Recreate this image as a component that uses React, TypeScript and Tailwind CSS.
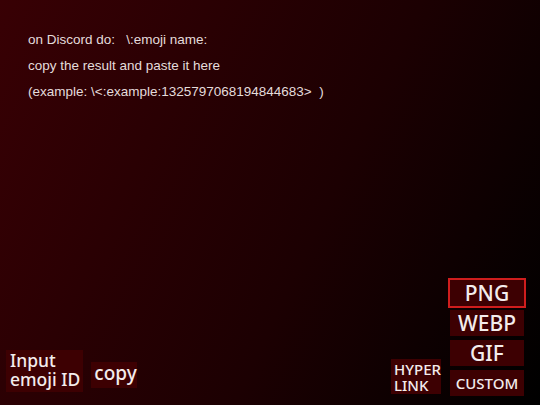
import React from "react";

const btn =
  "bg-[#3d0002] text-[#f3ecec] flex items-center justify-center leading-none";

export default function App() {
  return (
    <div className="w-[540px] h-[405px] overflow-hidden flex flex-col justify-between bg-[linear-gradient(115deg,#380004_0%,#1c0002_58%,#000000_100%)]">
      <div
        className="pt-[27px] pl-[28px] text-[13.5px] leading-[26px] text-[#e4dcdc] whitespace-pre"
        style={{ fontFamily: '"Liberation Sans", Arial, sans-serif' }}
      >
        <div>{"on Discord do:   \\:emoji name:"}</div>
        <div>copy the result and paste it here</div>
        <div>{"(example: \\<:example:1325797068194844683>  )"}</div>
      </div>

      <div
        className="flex items-end justify-between pl-[6px] pr-[16px] pb-[9px] font-medium whitespace-nowrap"
        style={{ fontFamily: '"Noto Sans", "Open Sans", sans-serif' }}
      >
        <div className="flex items-end gap-[8px] mb-[4px]">
          <div className="w-[77px] h-[42px] bg-[#3d0002] text-[#f3ecec] text-[17.5px] leading-[19px] pl-[4px] pt-[1px]">
            <div>Input</div>
            <div>emoji ID</div>
          </div>
          <div className={`${btn} w-[46px] h-[26px] mb-[4px] text-[19px] pb-[3px] pl-[3px]`}>
            copy
          </div>
        </div>

        <div className="flex items-end gap-[9px]">
          <div className="w-[50px] h-[35px] bg-[#3d0002] text-[#f3ecec] text-[15px] leading-[16px] pl-[3px] pt-[2px] mb-[2px]">
            <div>HYPER</div>
            <div>LINK</div>
          </div>
          <div className="flex flex-col gap-[4px] w-[74px]">
            <div className={`${btn} h-[26px] text-[21px] outline-2 outline-[#cf1d1d]`}>
              PNG
            </div>
            <div className={`${btn} h-[26px] text-[21px]`}>WEBP</div>
            <div className={`${btn} h-[26px] text-[21px]`}>GIF</div>
            <div className={`${btn} h-[26px] text-[15px]`}>CUSTOM</div>
          </div>
        </div>
      </div>
    </div>
  );
}
